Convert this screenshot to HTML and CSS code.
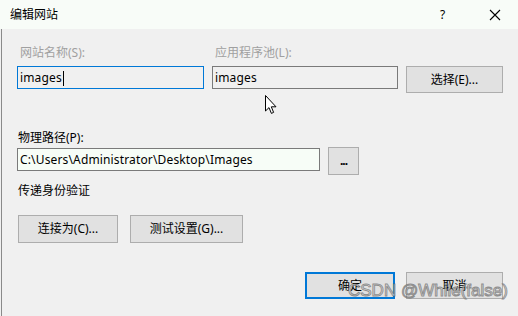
FILE: index.html
```html
<!DOCTYPE html>
<html lang="zh-CN">
<head>
  <meta charset="UTF-8">
  <title>编辑网站</title>
  <link rel="stylesheet" href="styles.css">
</head>
<body>
<div class="dialog">
  <!-- Title bar -->
  <div class="titlebar">
    <span class="title">编辑网站</span>
    <span class="help">?</span>
    <svg class="close" width="12" height="12" viewBox="0 0 12 12"><path d="M1 1 L11 11 M11 1 L1 11" stroke="#000" stroke-width="1.1" fill="none"/></svg>
  </div>

  <div class="content">
    <!-- Site name / app pool -->
    <div class="row row-site">
      <div class="field site-name">
        <label class="label muted indent">网站名称(S):</label>
        <div class="input focus">images<span class="caret"></span></div>
      </div>
      <div class="field app-pool">
        <label class="label muted indent">应用程序池(L):</label>
        <div class="input">images</div>
      </div>
      <button class="btn btn-select">选择(E)...</button>
    </div>

    <!-- Physical path -->
    <div class="field path-field">
      <label class="label">物理路径(P):</label>
      <div class="row">
        <div class="input path">C:\Users\Administrator\Desktop\Images</div>
        <button class="btn btn-browse">...</button>
      </div>
    </div>

    <div class="label auth-label">传递身份验证</div>
    <div class="row auth-buttons">
      <button class="btn btn-connect">连接为(C)...</button>
      <button class="btn btn-test">测试设置(G)...</button>
    </div>

    <div class="row footer">
      <button class="btn btn-ok">确定</button>
      <button class="btn btn-cancel">取消</button>
    </div>
  </div>

  <!-- overlays -->
  <svg class="cursor" width="13" height="20" viewBox="0 0 13 20"><path d="M0.5 0.5 L0.5 16 L4 12.6 L6.4 18.4 L8.6 17.4 L6.3 11.8 L11 11.8 Z" fill="#fff" stroke="#000" stroke-width="1"/></svg>
  <div class="watermark">CSDN @While(false)</div>
</div>
</body>
</html>
```

FILE: styles.css
```css
*, *::before, *::after { box-sizing: border-box; }
body { margin: 0; background: #f0f0f0; font-family: "Noto Sans", "Noto Sans CJK SC", sans-serif; font-size: 12px; color: #000; }
.dialog { position: relative; width: 518px; height: 316px; overflow: hidden; }
.titlebar { height: 29px; background: #f8fcf8; display: flex; align-items: center; padding-left: 10px; }
.title { flex: 1; font-size: 12px; line-height: 16px; }
.help { width: 12px; margin-right: 37px; font-size: 12px; }
.close { margin-right: 17px; }
.content { border-left: 1px solid #8a8a8a; margin-left: 1px; height: 287px; padding: 16px 15px 0 15px; }
.row { display: flex; align-items: flex-start; }
.field { display: flex; flex-direction: column; }
.label { line-height: 16px; height: 16px; white-space: nowrap; }
.muted { color: #a0a0a0; }
.indent { padding-left: 3px; }
.site-name .label, .app-pool .label { margin-bottom: 5px; }
.site-name { width: 187px; margin-right: 8px; }
.app-pool { width: 186px; margin-right: 8px; }
.input { height: 23px; border: 1px solid #7a7a7a; background: #f0f0f0; padding-left: 2px; line-height: 21px; white-space: nowrap; overflow: hidden; letter-spacing: 0.15px; }
.input.focus { border-color: #0078d7; }
.caret { display: inline-block; width: 1px; height: 15px; background: #000; vertical-align: middle; margin-left: 1px; }
.btn { font: inherit; color: #000; background: #e1e1e1; border: 1px solid #adadad; padding: 0; margin: 0; line-height: 1; }
.btn-select { width: 97px; height: 27px; margin-top: 21px; }
.path-field { margin-top: 37px; padding-left: 0; }
.path-field .label { padding-left: 1px; margin-bottom: 1px; }
.input.path { width: 303px; margin-top: 1px; margin-right: 8px; background: #f7fdf7; }
.btn-browse { width: 31px; height: 28px; font-weight: 700; letter-spacing: -1px; }
.auth-label { margin-top: 8px; padding-left: 1px; }
.auth-buttons { margin-top: 16px; padding-left: 1px; gap: 12px; }
.btn-connect { width: 100px; height: 28px; }
.btn-test { width: 113px; height: 28px; }
.footer { margin-top: 29px; justify-content: flex-end; gap: 11px; padding-right: 0; }
.btn-ok { width: 90px; height: 27px; border: 2px solid #0078d7; }
.btn-cancel { width: 97px; height: 27px; }
/* overlays */
.cursor { position: absolute; left: 265px; top: 95px; }
.watermark { position: absolute; left: 348px; top: 281px; font-family: "Liberation Sans", sans-serif; font-size: 17px; color: rgba(255,255,255,0.6); -webkit-text-stroke: 1px rgba(100,100,100,0.7); white-space: nowrap; }
```
